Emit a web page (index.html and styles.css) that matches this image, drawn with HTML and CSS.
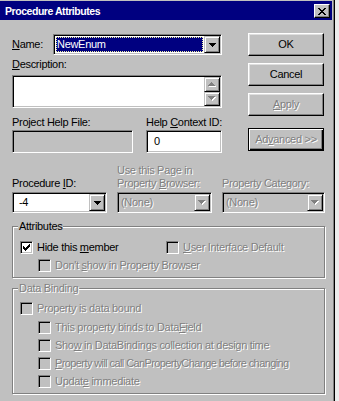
FILE: index.html
```html
<!DOCTYPE html>
<html>
<head>
<meta charset="utf-8">
<title>Procedure Attributes</title>
<link rel="stylesheet" href="styles.css">
</head>
<body>
<div class="screen">
  <div class="window">
    <div class="titlebar">
      <span class="title">Procedure Attributes</span>
      <span class="close"><svg width="8" height="7" viewBox="0 0 8 7" shape-rendering="crispEdges"><path fill="#000" d="M0 0h2v1h-2z M6 0h2v1h-2z M1 1h2v1h-2z M5 1h2v1h-2z M2 2h4v1h-4z M3 3h2v1h-2z M2 4h4v1h-4z M1 5h2v1h-2z M5 5h2v1h-2z M0 6h2v1h-2z M6 6h2v1h-2z"/></svg></span>
    </div>
    <div class="client">
      <div class="top">
        <div class="fields">
          <div class="name-row">
            <span class="name-lbl"><u>N</u>ame:</span>
            <div class="combo name">
              <div class="value"><span class="sel">NewEnum</span></div>
              <div class="drop"><svg width="7" height="4" viewBox="0 0 7 4" shape-rendering="crispEdges"><path fill="#000" d="M0 0h7v1H0z M1 1h5v1H1z M2 2h3v1H2z M3 3h1v1H3z"/></svg></div>
            </div>
          </div>
          <div class="desc-lbl"><u>D</u>escription:</div>
          <div class="desc">
            <div class="vscroll">
              <div class="sbtn"><svg width="8" height="5" viewBox="0 0 8 5" shape-rendering="crispEdges"><path fill="#fff" d="M4 1h1v1H4z M3 2h3v1H3z M2 3h5v1H2z M1 4h7v1H1z"/><path fill="#808080" d="M3 0h1v1H3z M2 1h3v1H2z M1 2h5v1H1z M0 3h7v1H0z"/></svg></div>
              <div class="sbtn"><svg width="8" height="5" viewBox="0 0 8 5" shape-rendering="crispEdges"><path fill="#fff" d="M1 1h7v1H1z M2 2h5v1H2z M3 3h3v1H3z M4 4h1v1H4z"/><path fill="#808080" d="M0 0h7v1H0z M1 1h5v1H1z M2 2h3v1H2z M3 3h1v1H3z"/></svg></div>
            </div>
          </div>
          <div class="help-row">
            <div class="help-file">
              <div class="lbl">Project Help File:</div>
              <div class="box off"></div>
            </div>
            <div class="help-ctx">
              <div class="lbl">Help <u>C</u>ontext ID:</div>
              <div class="box num">0</div>
            </div>
          </div>
        </div>
        <div class="btns">
          <div class="btn">OK</div>
          <div class="btn">Cancel</div>
          <div class="btn dis"><u>A</u>pply</div>
          <div class="btn adv dis">Ad<u>v</u>anced &gt;&gt;</div>
        </div>
      </div>

      <div class="proc-row">
        <div class="pcol c1">
          <div class="lbl">Procedure <u>I</u>D:</div>
          <div class="combo">
            <div class="value edit">-4</div>
            <div class="drop"><svg width="7" height="4" viewBox="0 0 7 4" shape-rendering="crispEdges"><path fill="#000" d="M0 0h7v1H0z M1 1h5v1H1z M2 2h3v1H2z M3 3h1v1H3z"/></svg></div>
          </div>
        </div>
        <div class="pcol c2">
          <div class="lbl dis">Use this Page in<br>Property <u>B</u>rowser:</div>
          <div class="combo off">
            <div class="value list dis">(None)</div>
            <div class="drop"><svg width="8" height="5" viewBox="0 0 8 5" shape-rendering="crispEdges"><path fill="#fff" d="M1 1h7v1H1z M2 2h5v1H2z M3 3h3v1H3z M4 4h1v1H4z"/><path fill="#808080" d="M0 0h7v1H0z M1 1h5v1H1z M2 2h3v1H2z M3 3h1v1H3z"/></svg></div>
          </div>
        </div>
        <div class="pcol c3">
          <div class="lbl dis">Property Category:</div>
          <div class="combo off">
            <div class="value list dis">(None)</div>
            <div class="drop"><svg width="8" height="5" viewBox="0 0 8 5" shape-rendering="crispEdges"><path fill="#fff" d="M1 1h7v1H1z M2 2h5v1H2z M3 3h3v1H3z M4 4h1v1H4z"/><path fill="#808080" d="M0 0h7v1H0z M1 1h5v1H1z M2 2h3v1H2z M3 3h1v1H3z"/></svg></div>
          </div>
        </div>
      </div>

      <div class="group attrs">
        <div class="legend">Attributes</div>
        <div class="row1">
          <div class="check first">
            <span class="cb on"><svg width="7" height="7" viewBox="0 0 7 7" shape-rendering="crispEdges"><path fill="#000" d="M6 0h1v1h-1z M5 1h2v1h-2z M0 2h1v1H0z M4 2h3v1h-3z M0 3h2v1H0z M3 3h3v1H3z M0 4h5v1H0z M1 5h3v1H1z M2 6h1v1H2z"/></svg></span>
            <span>Hide this <u>m</u>ember</span>
          </div>
          <div class="check">
            <span class="cb"></span>
            <span class="dis"><u>U</u>ser Interface Default</span>
          </div>
        </div>
        <div class="check sub r2">
          <span class="cb"></span>
          <span class="dis">Don't <u>s</u>how in Property Browser</span>
        </div>
      </div>

      <div class="group binding">
        <div class="legend dis">Data Binding</div>
        <div class="check main">
          <span class="cb"></span>
          <span class="dis">Property is data bound</span>
        </div>
        <div class="check sub s1">
          <span class="cb"></span>
          <span class="dis">This property binds to Data<u>F</u>ield</span>
        </div>
        <div class="check sub">
          <span class="cb"></span>
          <span class="dis">Sho<u>w</u> in DataBindings collection at design time</span>
        </div>
        <div class="check sub">
          <span class="cb"></span>
          <span class="dis tight"><u>P</u>roperty will call CanPropertyChange before changing</span>
        </div>
        <div class="check sub">
          <span class="cb"></span>
          <span class="dis">Updat<u>e</u> immediate</span>
        </div>
      </div>
    </div>
  </div>
  <div class="outside"></div>
</div>
</body>
</html>
```

FILE: styles.css
```css
* { box-sizing: border-box; }
html, body { margin: 0; padding: 0; }
body {
  width: 339px;
  height: 401px;
  overflow: hidden;
  background: #ececec;
  font-family: "Liberation Sans", Arial, sans-serif;
  font-size: 11px;
  line-height: 13px;
  letter-spacing: -0.3px;
  color: #000;
}
u { text-decoration: underline; text-underline-offset: 1px; }
.lbl { white-space: nowrap; }

.screen { display: flex; height: 401px; }
.window {
  width: 335px;
  height: 401px;
  flex: none;
  background: #c0c0c0;
  padding: 1px 2px 0 0;
  border-right: 1px solid #000;
  box-shadow: inset -1px 0 0 #808080;
}
.outside { flex: 1; background: #ececec; }

.titlebar {
  height: 19px;
  background: #000080;
  display: flex;
  justify-content: space-between;
  align-items: flex-start;
  padding: 4px 2px 0 5px;
}
.title {
  color: #fff;
  font-weight: bold;
  font-size: 10.5px;
  letter-spacing: -0.45px;
  line-height: 13px;
}
.close {
  width: 16px;
  height: 14px;
  margin-top: -1px;
  background: #c0c0c0;
  border: 1px solid;
  border-color: #fff #000 #000 #fff;
  box-shadow: inset -1px -1px 0 #808080;
  display: flex;
  align-items: center;
  justify-content: center;
}
.close svg, .drop svg, .sbtn svg, .cb svg { display: block; }

.client { padding: 0 6px 0 12px; }

.top { display: flex; margin-top: 13px; }
.fields { width: 210px; }
.name-row { display: flex; align-items: center; margin-top: 1px; }
.name-lbl { width: 41px; }

.combo, .desc, .box {
  border: 1px solid;
  border-color: #808080 #fff #fff #808080;
  box-shadow: inset 1px 1px 0 #000, inset -1px -1px 0 #c0c0c0;
  padding: 1px;
  background: #fff;
}
.combo { display: flex; height: 21px; }
.combo.name { width: 169px; }
.combo.off { background: #c0c0c0; }
.value { flex: 1; display: flex; align-items: center; min-width: 0; }
.value.edit { padding-left: 5px; }
.value.list { padding-left: 2px; }
.sel {
  flex: 1;
  margin: 1px;
  height: 15px;
  background: #000080;
  color: #fff;
  border: 1px dotted #f0f0a0;
  line-height: 13px;
}
.drop {
  width: 16px;
  flex: none;
  background: #c0c0c0;
  border: 1px solid;
  border-color: #c0c0c0 #000 #000 #c0c0c0;
  box-shadow: inset 1px 1px 0 #fff, inset -1px -1px 0 #808080;
  display: flex;
  align-items: center;
  justify-content: center;
}

.desc-lbl { margin-top: 3px; }
.desc {
  height: 33px;
  margin-top: 4px;
  width: 210px;
  display: flex;
  justify-content: flex-end;
}
.vscroll { width: 16px; display: flex; flex-direction: column; }
.sbtn {
  flex: 1;
  background: #c0c0c0;
  border: 1px solid;
  border-color: #c0c0c0 #000 #000 #c0c0c0;
  box-shadow: inset 1px 1px 0 #fff, inset -1px -1px 0 #808080;
  display: flex;
  align-items: center;
  justify-content: center;
}

.help-row { display: flex; justify-content: space-between; margin-top: 8px; }
.help-file { width: 121px; }
.help-ctx { width: 76px; }
.box { height: 23px; margin-top: 1px; }
.box.off { background: #c0c0c0; }
.box.num { display: flex; align-items: center; padding-left: 7px; }

.btns {
  margin-left: auto;
  margin-right: 2px;
  width: 76px;
  display: flex;
  flex-direction: column;
}
.btn {
  height: 23px;
  margin-top: 7px;
  background: #c0c0c0;
  border: 1px solid;
  border-color: #fff #000 #000 #fff;
  box-shadow: inset -1px -1px 0 #808080, inset 1px 1px 0 #dfdfdf;
  display: flex;
  align-items: center;
  justify-content: center;
  white-space: nowrap;
}
.btn:first-child { margin-top: 0; }
.btn.adv {
  margin-top: 12px;
  border-color: #000;
  box-shadow: inset 1px 1px 0 #fff, inset -1px -1px 0 #000, inset -2px -2px 0 #808080;
}

.dis { color: #808080; text-shadow: 1px 1px 0 #fff; }
.tight { letter-spacing: -0.6px; }

.proc-row { display: flex; gap: 10px; align-items: flex-end; margin-top: 11px; }
.pcol { display: flex; flex-direction: column; }
.pcol .combo { margin-top: 2px; }
.c1, .c2 { width: 95px; }
.c3 { width: 103px; }

.group {
  width: 313px;
  border: 1px solid #808080;
  box-shadow: inset 1px 1px 0 #fff, 1px 1px 0 #fff;
  padding: 0 0 5px 7px;
}
.attrs { margin-top: 13px; }
.binding { margin-top: 10px; }
.legend {
  width: fit-content;
  margin: -7px 0 0 -2px;
  padding: 0 1px;
  background: #c0c0c0;
  white-space: nowrap;
}

.check { display: flex; align-items: center; gap: 4px; white-space: nowrap; }
.cb {
  width: 13px;
  height: 13px;
  flex: none;
  border: 1px solid;
  border-color: #808080 #fff #fff #808080;
  box-shadow: inset 1px 1px 0 #000, inset -1px -1px 0 #c0c0c0;
  background: #c0c0c0;
  display: flex;
  align-items: center;
  justify-content: center;
}
.cb.on { background: #fff; }

.row1 { display: flex; margin-top: 8px; }
.check.first { width: 146px; }
.check.sub { margin-left: 18px; margin-top: 5px; }
.check.main { margin-top: 7px; }
.check.sub.s1 { margin-top: 6px; }
```
